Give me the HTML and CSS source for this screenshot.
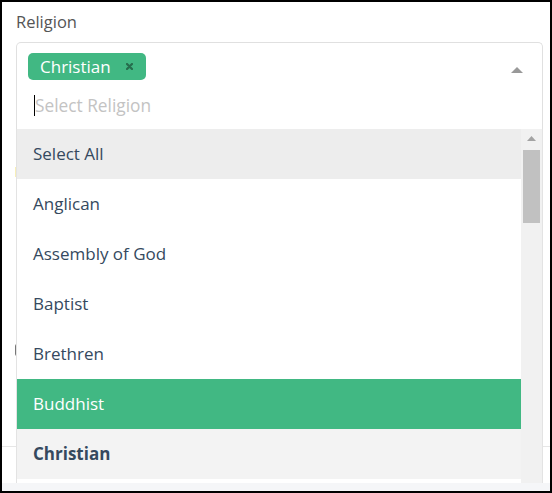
FILE: index.html
```html
<!DOCTYPE html>
<html>
<head>
<meta charset="utf-8">
<link rel="stylesheet" href="styles.css">
</head>
<body>
  <div class="field">
    <div class="label">Religion</div>
    <div class="select">
      <div class="tags">
        <span class="tag">Christian<svg class="tag-x" width="7" height="7" viewBox="0 0 7 7"><path d="M1 1L6 6M6 1L1 6" stroke="#266d4d" stroke-width="2.2" stroke-linecap="round"/></svg></span>
      </div>
      <div class="input"><span class="caret"></span><span class="placeholder">Select Religion</span></div>
      <svg class="arrow" width="12" height="6" viewBox="0 0 12 6"><path d="M6 0L12 6H0Z" fill="#999"/></svg>
      <div class="menu">
        <ul class="options">
          <li class="opt opt-group">Select All</li>
          <li class="opt">Anglican</li>
          <li class="opt">Assembly of God</li>
          <li class="opt">Baptist</li>
          <li class="opt">Brethren</li>
          <li class="opt opt-hl">Buddhist</li>
          <li class="opt opt-sel">Christian</li>
        </ul>
        <div class="scrollbar">
          <div class="sb-btn"><svg width="9" height="5" viewBox="0 0 9 5"><path d="M4.5 0L9 5H0Z" fill="#a3a3a3"/></svg></div>
          <div class="sb-thumb"></div>
        </div>
      </div>
    </div>
  </div>
  <div class="content">
    <div class="behind-input"></div>
    <div class="behind-check"></div>
  </div>
  <div class="footer"></div>
  <div class="bottom"></div>
</body>
</html>
```
FILE: styles.css
```css
html, body { margin: 0; padding: 0; }
body {
  width: 552px;
  height: 493px;
  box-sizing: border-box;
  border: 2px solid #000;
  background: #fff;
  font-family: "Open Sans", "Liberation Sans", sans-serif;
  overflow: hidden;
  display: flex;
  flex-direction: column;
}
.field {
  padding: 9px 7px 0 14px;
}
.label {
  font-size: 16.5px;
  line-height: 22px;
  color: #555;
  margin-bottom: 9px;
}
.select {
  position: relative;
  box-sizing: border-box;
  height: 87px;
  border: 1px solid #e0e0e0;
  border-bottom: none;
  border-radius: 5px 5px 0 0;
  padding: 10px 0 0 11px;
}
.tags { display: flex; }
.tag {
  display: inline-flex;
  align-items: center;
  box-sizing: border-box;
  height: 27px;
  width: 118px;
  padding: 0 0 1px 12px;
  background: #41b883;
  color: #fff;
  border-radius: 5px;
  font-size: 17px;
  font-weight: 500;
}
.tag-x { margin-left: auto; margin-right: 13px; margin-top: 1px; }
.input {
  display: flex;
  align-items: center;
  height: 24px;
  margin-top: 13px;
  padding-left: 6px;
}
.caret {
  width: 1px;
  height: 21px;
  background: #000;
}
.placeholder {
  font-size: 17.3px;
  color: #c3c3c3;
}
.arrow {
  position: absolute;
  top: 24px;
  right: 19px;
}
.menu {
  position: absolute;
  top: 100%;
  left: -1px;
  right: -1px;
  height: 354px;
  box-sizing: border-box;
  border: 1px solid #e3e3e3;
  border-top: none;
  border-bottom: none;
  background: #fff;
  display: flex;
  z-index: 5;
}
.options {
  list-style: none;
  margin: 0;
  padding: 0;
  flex: 1;
  overflow: hidden;
}
.opt {
  height: 50px;
  box-sizing: border-box;
  display: flex;
  align-items: center;
  padding: 0 0 2px 16px;
  font-size: 17px;
  color: #35495e;
}
.opt-group { background: #ededed; }
.opt-hl { background: #41b883; color: #fff; }
.opt-sel { background: #f3f3f3; font-weight: 700; }
.scrollbar {
  width: 21px;
  background: #f1f1f1;
  display: flex;
  flex-direction: column;
  align-items: center;
}
.sb-btn {
  height: 21px;
  display: flex;
  align-items: center;
  justify-content: center;
  width: 100%;
}
.sb-btn svg { margin-top: -2px; }
.sb-thumb {
  width: 17px;
  height: 73px;
  background: #c1c1c1;
}
.content {
  flex: 1;
  padding-top: 38px;
  padding-left: 13px;
}
.behind-input {
  width: 10px;
  height: 10px;
  border-left: 2px solid #f8efb8;
}
.behind-check {
  margin-top: 167px;
  width: 12px;
  height: 12px;
  box-sizing: border-box;
  border: 2px solid #777;
  border-radius: 2px;
}
.footer {
  height: 37px;
  box-sizing: border-box;
  border-top: 1px solid #e6e6e6;
}
.bottom {
  height: 8px;
  background: #f5f6f8;
}
```
